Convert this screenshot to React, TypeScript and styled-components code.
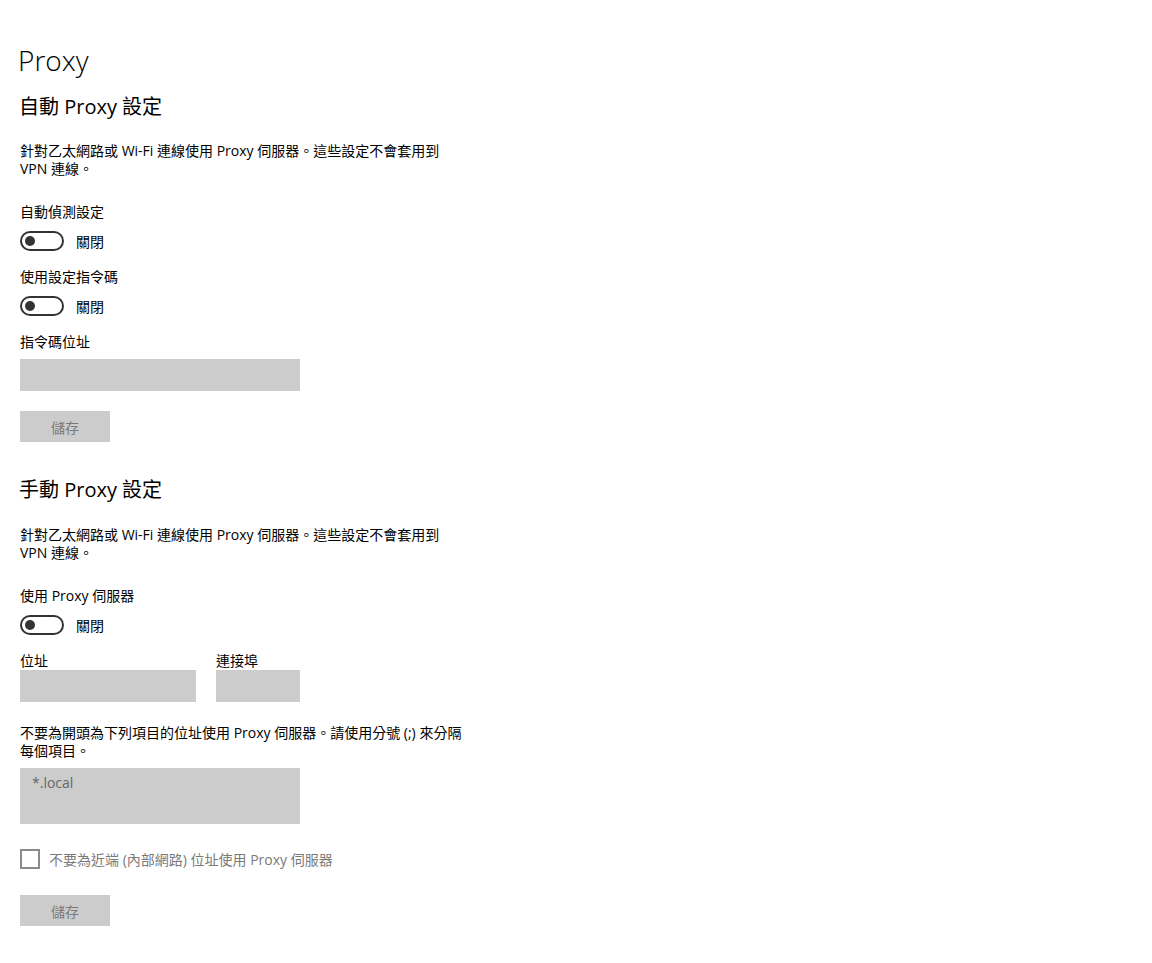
import React from 'react';
import styled, { createGlobalStyle } from 'styled-components';

const GlobalStyle = createGlobalStyle`
  html, body {
    margin: 0;
    padding: 0;
    background: #ffffff;
  }
  body {
    font-family: "Open Sans", "Noto Sans CJK TC", sans-serif;
    color: #000000;
  }
`;

const Page = styled.div`
  display: flex;
  flex-direction: column;
  align-items: flex-start;
  padding: 40px 0 40px 20px;
  width: 1132px;
  min-height: 883px;
`;

const PageTitle = styled.h1`
  margin: 0 0 0 -2px;
  font-size: 28px;
  line-height: 40px;
  font-weight: 300;
`;

const SectionTitle = styled.h2<{ $gap: number }>`
  margin: ${(p) => p.$gap}px 0 0 -1px;
  font-size: 20px;
  line-height: 28px;
  font-weight: 400;
`;

const Description = styled.p<{ $gap: number }>`
  margin: ${(p) => p.$gap}px 0 0;
  font-size: 14px;
  line-height: 18px;
  white-space: nowrap;
`;

const Label = styled.div<{ $gap: number }>`
  margin-top: ${(p) => p.$gap}px;
  font-size: 14px;
  line-height: 20px;
`;

const ToggleRow = styled.div`
  display: flex;
  align-items: center;
  gap: 12px;
  margin-top: 9px;
  height: 20px;
  font-size: 14px;
`;

const ToggleTrack = styled.div`
  box-sizing: border-box;
  width: 44px;
  height: 20px;
  border: 2px solid #333333;
  border-radius: 10px;
  display: flex;
  align-items: center;
  padding-left: 3px;
`;

const ToggleThumb = styled.div`
  width: 10px;
  height: 10px;
  border-radius: 50%;
  background: #333333;
`;

const TextBox = styled.div<{ $width: number; $height: number; $gap?: number }>`
  box-sizing: border-box;
  margin-top: ${(p) => p.$gap ?? 0}px;
  width: ${(p) => p.$width}px;
  height: ${(p) => p.$height}px;
  background: #cccccc;
  padding: 6px 12px;
  font-size: 14px;
  line-height: 18px;
  color: #666666;
`;

const SaveButton = styled.div<{ $gap: number }>`
  margin-top: ${(p) => p.$gap}px;
  width: 90px;
  height: 31px;
  background: #cccccc;
  color: #7a7a7a;
  font-size: 14px;
  display: flex;
  align-items: center;
  justify-content: center;
`;

const FieldRow = styled.div`
  display: flex;
  gap: 20px;
  margin-top: 17px;
`;

const Field = styled.div`
  display: flex;
  flex-direction: column;
  font-size: 14px;
  line-height: 18px;
`;

const CheckRow = styled.div`
  display: flex;
  align-items: center;
  gap: 9px;
  margin-top: 25px;
  height: 20px;
  font-size: 14px;
  color: #7a7a7a;
`;

const CheckBox = styled.div`
  box-sizing: border-box;
  width: 20px;
  height: 20px;
  border: 2px solid #8a8a8a;
`;

const Toggle = () => (
  <ToggleRow>
    <ToggleTrack>
      <ToggleThumb />
    </ToggleTrack>
    <span>關閉</span>
  </ToggleRow>
);

export default function App() {
  return (
    <>
      <GlobalStyle />
      <Page>
        <PageTitle>Proxy</PageTitle>

        <SectionTitle $gap={13}>自動 Proxy 設定</SectionTitle>
        <Description $gap={21}>
          針對乙太網路或 Wi-Fi 連線使用 Proxy 伺服器。這些設定不會套用到
          <br />
          VPN 連線。
        </Description>
        <Label $gap={24}>自動偵測設定</Label>
        <Toggle />
        <Label $gap={16}>使用設定指令碼</Label>
        <Toggle />
        <Label $gap={16}>指令碼位址</Label>
        <TextBox $width={280} $height={32} $gap={7} />
        <SaveButton $gap={20}>儲存</SaveButton>

        <SectionTitle $gap={34}>手動 Proxy 設定</SectionTitle>
        <Description $gap={22}>
          針對乙太網路或 Wi-Fi 連線使用 Proxy 伺服器。這些設定不會套用到
          <br />
          VPN 連線。
        </Description>
        <Label $gap={24}>使用 Proxy 伺服器</Label>
        <Toggle />
        <FieldRow>
          <Field>
            位址
            <TextBox $width={176} $height={32} />
          </Field>
          <Field>
            連接埠
            <TextBox $width={84} $height={32} />
          </Field>
        </FieldRow>
        <Description $gap={22}>
          不要為開頭為下列項目的位址使用 Proxy 伺服器。請使用分號 (;) 來分隔
          <br />
          每個項目。
        </Description>
        <TextBox $width={280} $height={56} $gap={8}>
          *.local
        </TextBox>
        <CheckRow>
          <CheckBox />
          <span>不要為近端 (內部網路) 位址使用 Proxy 伺服器</span>
        </CheckRow>
        <SaveButton $gap={26}>儲存</SaveButton>
      </Page>
    </>
  );
}
